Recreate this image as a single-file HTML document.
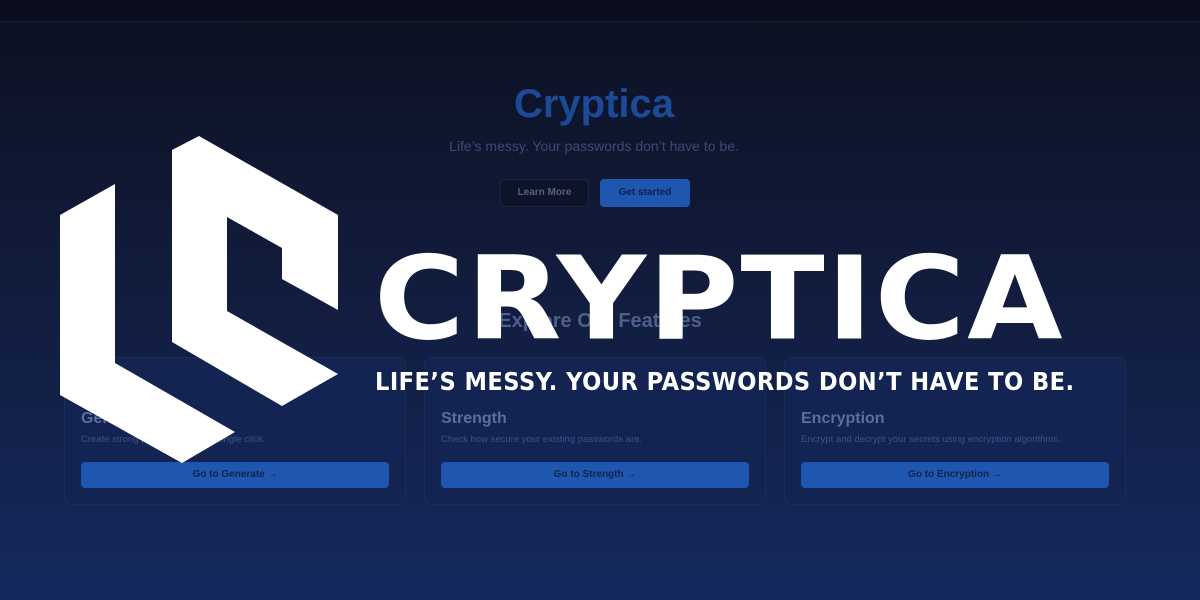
<!DOCTYPE html>
<html><head><style>
*{margin:0;padding:0;box-sizing:border-box}
body{width:1200px;height:600px;overflow:hidden;position:relative;font-family:"Liberation Sans",sans-serif;background:linear-gradient(180deg,#0c1122 0%,#111a38 40%,#15295e 100%)}
.nav{position:absolute;top:0;left:0;width:1200px;height:22px;border-bottom:1px solid #161d33;background:#0b0f1d}
.c{position:absolute;text-align:center}
.btn{position:absolute;border-radius:4px;font-size:10px;font-weight:bold;text-align:center}
.card{position:absolute;top:357px;width:342px;height:148px;border:1px solid #1c2c58;border-radius:8px;background:#132352}
.card h3{position:absolute;left:16px;top:52px;font-size:16px;color:#5c6e9c}
.card p{position:absolute;left:16px;top:76px;font-size:9.5px;color:#3e5186;white-space:nowrap}
.card .b{position:absolute;left:16px;top:104px;width:308px;height:26px;background:#1e56b0;border-radius:4px;color:#12244e;font-size:10px;font-weight:bold;text-align:center;line-height:26px}
.big{position:absolute;left:374px;top:242px;font-family:"DejaVu Sans",sans-serif;font-weight:bold;font-size:124px;color:#fff;letter-spacing:2px;transform:scaleX(0.995) scaleY(0.93);transform-origin:left top;white-space:nowrap;line-height:1}
.tag{position:absolute;left:375px;top:369px;font-family:"DejaVu Sans",sans-serif;font-weight:bold;font-size:25px;color:#fff;white-space:nowrap;transform:scaleX(0.903);transform-origin:left top;line-height:1;letter-spacing:0.5px}
</style></head><body>
<div class="nav"></div>
<div class="c" style="left:0;width:1188px;top:82px;font-size:40px;font-weight:bold;color:#1c4a96">Cryptica</div>
<div class="c" style="left:0;width:1188px;top:138px;font-size:14px;color:#3b4a72">Life’s messy. Your passwords don’t have to be.</div>
<div class="btn" style="left:500px;top:179px;width:89px;height:28px;border:1px solid #1c2440;background:#0e1428;color:#58607e;line-height:26px">Learn More</div>
<div class="btn" style="left:600px;top:179px;width:90px;height:28px;background:#1e56b0;color:#10214a;line-height:28px">Get started</div>
<div class="c" style="left:470px;width:260px;top:310px;font-size:20px;font-weight:bold;color:#4e5f8c">Explore Our Features</div>
<div class="card" style="left:64px"><h3>Generate</h3><p>Create strong passwords with a single click.</p><div class="b">Go to Generate →</div></div>
<div class="card" style="left:424px"><h3>Strength</h3><p>Check how secure your existing passwords are.</p><div class="b">Go to Strength →</div></div>
<div class="card" style="left:784px"><h3>Encryption</h3><p>Encrypt and decrypt your secrets using encryption algorithms.</p><div class="b">Go to Encryption →</div></div>
<svg style="position:absolute;left:0;top:0" width="1200" height="600">
<polygon fill="#fff" points="60,215 115,184 115,363 235,432 182,463 60,395"/>
<polygon fill="#fff" points="172,150 199,136 338,215 338,310 282,279 282,248 227,217 227,311 338,374 282,406 172,342"/>
</svg>
<div class="big">CRYPTICA</div>
<div class="tag">LIFE’S MESSY. YOUR PASSWORDS DON’T HAVE TO BE.</div>
</body></html>
